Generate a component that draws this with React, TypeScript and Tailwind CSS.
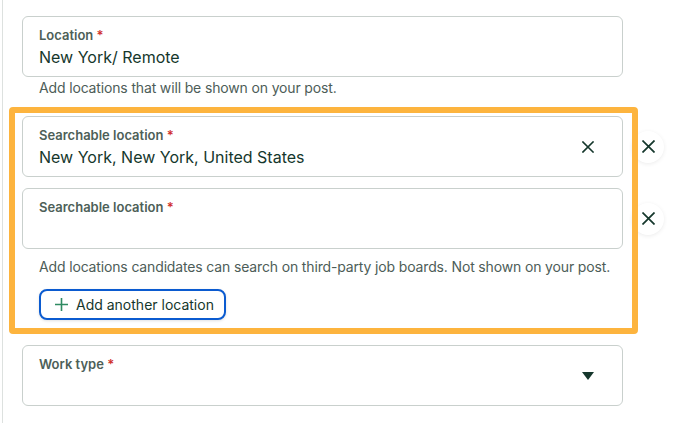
import React from 'react';

const font = { fontFamily: 'Inter, "Liberation Sans", sans-serif' };

const Cross = ({ size = 12, stroke = 1.6 }: { size?: number; stroke?: number }) => (
  <svg width={size} height={size} viewBox="0 0 12 12" fill="none" stroke="#15372c" strokeWidth={stroke} strokeLinecap="square">
    <path d="M1 1L11 11M11 1L1 11" />
  </svg>
);

const Label = ({ text }: { text: string }) => (
  <div className="text-[13px] leading-[16px] font-semibold text-[#4d5f58]">
    {text} <span className="text-[#d0312d]">*</span>
  </div>
);

const Field = ({ label, value, clear }: { label: string; value?: string; clear?: boolean }) => (
  <div className="w-[601px] h-[61px] shrink-0 border border-[#c9d0cd] rounded-[6px] bg-white pl-4 pr-[28px] pt-[10px] flex items-start">
    <div className="flex-1">
      <Label text={label} />
      {value && <div className="mt-[2px] text-[16px] leading-[24px] text-[#15372c]">{value}</div>}
    </div>
    {clear && (
      <div className="self-center -mt-[10px]">
        <Cross />
      </div>
    )}
  </div>
);

const RemoveButton = () => (
  <button className="w-[32px] h-[32px] rounded-full bg-white shadow-[0_1px_4px_rgba(0,0,0,0.08)] flex items-center justify-center">
    <Cross size={13} />
  </button>
);

export default function App() {
  return (
    <div className="w-[695px] h-[423px] bg-white overflow-hidden relative" style={font}>
      <div className="ml-[2px] h-full border-l border-[#dde1df] pl-[19px]">
        {/* Location */}
        <div className="pt-[16px]">
          <Field label="Location" value="New York/ Remote" />
          <div className="mt-[1px] pl-[17px] text-[14px] leading-[20px] tracking-[-0.15px] text-[#4d5d58]">
            Add locations that will be shown on your post.
          </div>
        </div>

        {/* Searchable locations */}
        <div className="mt-[18px]">
          <div className="flex items-center gap-[9px]">
            <Field label="Searchable location" value="New York, New York, United States" clear />
            <RemoveButton />
          </div>
          <div className="mt-[11px] flex items-center gap-[9px]">
            <Field label="Searchable location" />
            <RemoveButton />
          </div>
          <div className="mt-[8px] pl-[17px] text-[14px] leading-[20px] tracking-[-0.15px] text-[#4d5d58]">
            Add locations candidates can search on third-party job boards. Not shown on your post.
          </div>
          <button className="mt-[12px] ml-[17px] h-[31px] pl-[14px] pr-[10px] flex items-center gap-[8px] border-2 border-[#0b5bd0] rounded-[8px] bg-white shadow-[0_1px_3px_rgba(0,0,0,0.12)] text-[14px] text-[#15372c]">
            <svg width="13" height="13" viewBox="0 0 13 13" fill="none" stroke="#2f8a62" strokeWidth="1.6">
              <path d="M6.5 0V13M0 6.5H13" />
            </svg>
            Add another location
          </button>
        </div>

        {/* Work type */}
        <div className="mt-[25px] w-[601px] h-[61px] border border-[#c9d0cd] rounded-[6px] pl-4 pr-[28px] pt-[10px] flex items-start">
          <div className="flex-1">
            <Label text="Work type" />
          </div>
          <svg className="self-center -mt-[10px]" width="12" height="8" viewBox="0 0 12 8">
            <path d="M0 0H12L6 8Z" fill="#15372c" />
          </svg>
        </div>
      </div>

      {/* highlight annotation */}
      <div className="absolute left-[9px] top-[107px] w-[629px] h-[227px] border-[6px] border-[#fdb43e] rounded-[4px] pointer-events-none" />
    </div>
  );
}
